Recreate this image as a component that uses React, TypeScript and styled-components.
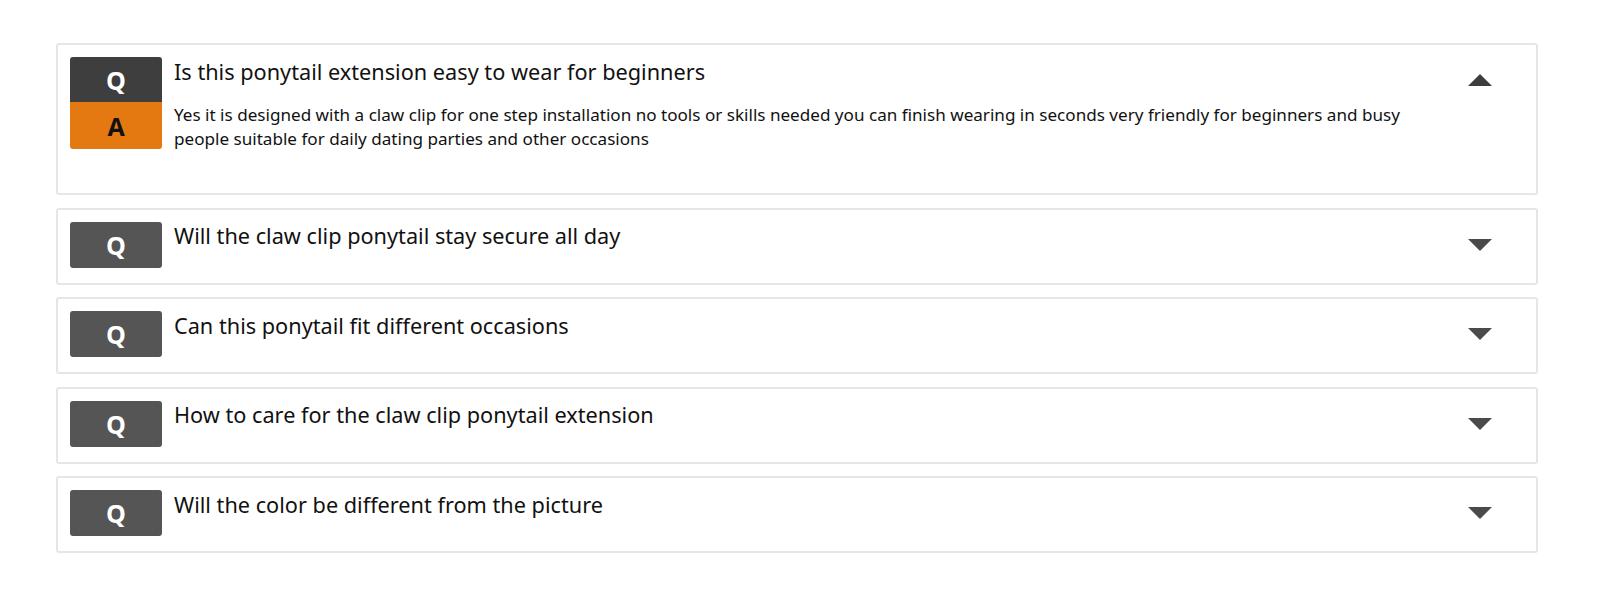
import styled, { createGlobalStyle } from "styled-components";

type Item = {
  question: string;
  answer?: string;
  open?: boolean;
};

const items: Item[] = [
  {
    question: "Is this ponytail extension easy to wear for beginners",
    answer:
      "Yes it is designed with a claw clip for one step installation no tools or skills needed you can finish wearing in seconds very friendly for beginners and busy people suitable for daily dating parties and other occasions",
    open: true,
  },
  { question: "Will the claw clip ponytail stay secure all day" },
  { question: "Can this ponytail fit different occasions" },
  { question: "How to care for the claw clip ponytail extension" },
  { question: "Will the color be different from the picture" },
];

const GlobalStyle = createGlobalStyle`
  html, body {
    margin: 0;
    padding: 0;
    background: #fff;
    font-family: "Noto Sans", "Open Sans", Arial, sans-serif;
    color: #111;
  }
`;

const Page = styled.main`
  width: 1600px;
  height: 606px;
  box-sizing: border-box;
  padding: 43px 62px 0 56px;
  display: flex;
  flex-direction: column;
  gap: 12.5px;
`;

const Card = styled.section<{ $open?: boolean }>`
  position: relative;
  box-sizing: border-box;
  border: 2px solid #e6e6e6;
  border-radius: 3px;
  padding: 12px 60px ${(p) => (p.$open ? "42px" : "15px")} 12px;
  display: flex;
  flex-direction: column;
`;

const Row = styled.div`
  display: flex;
  align-items: flex-start;
  gap: 12px;
`;

const Badge = styled.div<{ $kind: "q" | "a"; $open?: boolean }>`
  flex: 0 0 92px;
  height: ${(p) => (p.$kind === "a" ? "47px" : p.$open ? "45px" : "46px")};
  display: flex;
  align-items: center;
  justify-content: center;
  font-family: "Open Sans", "Noto Sans", Arial, sans-serif;
  font-weight: 700;
  font-size: 25px;
  background: ${(p) =>
    p.$kind === "a" ? "#e47911" : p.$open ? "#3e3e3e" : "#555555"};
  color: ${(p) => (p.$kind === "a" ? "#111" : "#fff")};
  border-radius: ${(p) =>
    p.$kind === "a" ? "0 0 3px 3px" : p.$open ? "3px 3px 0 0" : "3px"};
`;

const Question = styled.h3<{ $open?: boolean }>`
  margin: ${(p) => (p.$open ? "0" : "-0.5px")} 0 0;
  font-size: 21.7px;
  font-weight: 400;
  line-height: 30px;
  color: #111;
`;

const Answer = styled.p`
  margin: 1px 0 0;
  font-size: 17.1px;
  line-height: 24px;
  color: #111;
  max-width: 1245px;
`;

const Arrow = styled.svg`
  position: absolute;
  right: 44px;
  top: 29px;
`;

const Chevron = ({ up }: { up?: boolean }) => (
  <Arrow width="24" height="12" viewBox="0 0 24 12">
    {up ? (
      <polygon points="0,12 24,12 12,0" fill="#3e3e3e" />
    ) : (
      <polygon points="0,0 24,0 12,12" fill="#4a4a4a" />
    )}
  </Arrow>
);

const FaqCard = ({ question, answer, open }: Item) => (
  <Card $open={open}>
    <Row>
      <Badge $kind="q" $open={open}>
        Q
      </Badge>
      <Question $open={open}>{question}</Question>
    </Row>
    {open && answer && (
      <Row>
        <Badge $kind="a">A</Badge>
        <Answer>{answer}</Answer>
      </Row>
    )}
    <Chevron up={open} />
  </Card>
);

export default function App() {
  return (
    <>
      <GlobalStyle />
      <Page>
        {items.map((it) => (
          <FaqCard key={it.question} {...it} />
        ))}
      </Page>
    </>
  );
}
